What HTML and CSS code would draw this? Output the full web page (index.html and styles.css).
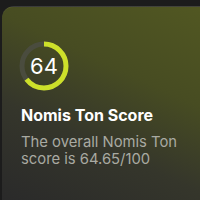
FILE: index.html
```html
<!DOCTYPE html>
<html>
<head>
<meta charset="utf-8">
<link rel="stylesheet" href="styles.css">
</head>
<body>
<div class="card">
  <div class="ring">
    <svg width="50" height="50" viewBox="0 0 50 50">
      <circle class="track" cx="25" cy="25" r="22" />
      <circle class="progress" cx="25" cy="25" r="22" pathLength="100" stroke-dasharray="64.65 100" transform="rotate(-90 25 25)" />
    </svg>
    <span class="ring-value">64</span>
  </div>
  <h2 class="title">Nomis Ton Score</h2>
  <p class="desc">The overall Nomis Ton score is 64.65/100</p>
</div>
</body>
</html>
```
FILE: styles.css
```css
html, body {
  margin: 0;
  padding: 0;
  background: #1c1c1c;
  width: 200px;
  height: 200px;
  overflow: hidden;
}
body {
  font-family: Inter, "Liberation Sans", sans-serif;
}
.card {
  margin: 6px 0 0 2px;
  width: 198px;
  height: 194px;
  box-sizing: border-box;
  padding: 34px 0 0 17px;
  border-radius: 12px 0 0 0;
  border-top: 1px solid rgba(255,255,255,0.08);
  background: linear-gradient(205deg, #515722 0%, #474c22 35%, #35362b 65%, #2a2a2a 100%);
}
.ring {
  position: relative;
  width: 50px;
  height: 50px;
}
.ring svg {
  display: block;
}
.track {
  fill: none;
  stroke: #4a4c3e;
  stroke-width: 5;
}
.progress {
  fill: none;
  stroke: #cde02a;
  stroke-width: 5;
}
.ring-value {
  position: absolute;
  inset: 0;
  display: flex;
  align-items: center;
  justify-content: center;
  color: #fff;
  font-size: 22px;
  font-weight: 400;
}
.title {
  margin: 14px 0 0 2px;
  color: #fff;
  font-size: 16px;
  font-weight: 700;
  line-height: 20px;
}
.desc {
  margin: 9px 0 0 2px;
  width: 170px;
  color: #a9aaa2;
  font-size: 14.8px;
  line-height: 17px;
}
```
